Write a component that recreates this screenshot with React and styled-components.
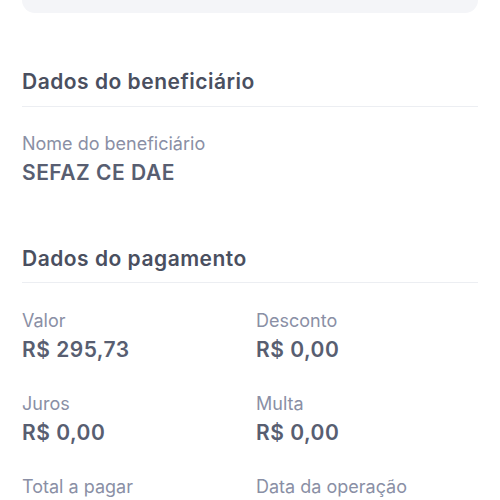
import React from "react";
import styled, { createGlobalStyle } from "styled-components";

const GlobalStyle = createGlobalStyle`
  body {
    margin: 0;
    background: #ffffff;
    font-family: Inter, "Noto Sans", sans-serif;
  }
`;

const Page = styled.div`
  padding: 0 22px;
`;

const TopCard = styled.div`
  height: 13px;
  background: #f4f5f8;
  border-radius: 0 0 14px 14px;
  margin-bottom: 55px;
`;

const Section = styled.section`
  margin-bottom: ${(p) => p.$gap || 0}px;
`;

const Heading = styled.h2`
  margin: 0 0 ${(p) => p.$after || 26}px;
  padding-bottom: ${(p) => p.$pad || 10}px;
  border-bottom: 1px solid #eceef2;
  font-size: 21px;
  line-height: 28px;
  font-weight: 600;
  letter-spacing: 0.5px;
  color: #4a4f5f;
`;

const Grid = styled.div`
  display: grid;
  grid-template-columns: 1fr 1fr;
  column-gap: 12px;
  row-gap: 30px;
`;

const Field = styled.div`
  display: flex;
  flex-direction: column;
  gap: 5px;
`;

const Label = styled.span`
  font-size: 18px;
  line-height: 22px;
  color: #8a8fa5;
`;

const Value = styled.span`
  font-size: 21px;
  line-height: 26px;
  font-weight: 600;
  letter-spacing: 0.5px;
  color: #585e71;
`;

const payment = [
  ["Valor", "R$ 295,73"],
  ["Desconto", "R$ 0,00"],
  ["Juros", "R$ 0,00"],
  ["Multa", "R$ 0,00"],
  ["Total a pagar", "R$ 295,73"],
  ["Data da operação", "12/03/2024"],
];

export default function App() {
  return (
    <Page>
      <GlobalStyle />
      <TopCard />
      <Section $gap={59}>
        <Heading $pad={10} $after={26}>Dados do beneficiário</Heading>
        <Field>
          <Label>Nome do beneficiário</Label>
          <Value>SEFAZ CE DAE</Value>
        </Field>
      </Section>
      <Section>
        <Heading $pad={9} $after={27}>Dados do pagamento</Heading>
        <Grid>
          {payment.map(([label, value]) => (
            <Field key={label}>
              <Label>{label}</Label>
              <Value>{value}</Value>
            </Field>
          ))}
        </Grid>
      </Section>
    </Page>
  );
}
